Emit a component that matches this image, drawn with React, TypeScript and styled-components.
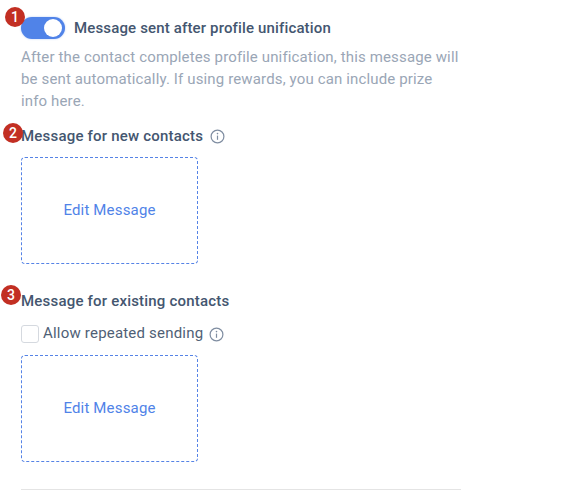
import { createGlobalStyle } from "styled-components";
import styled from "styled-components";

const GlobalStyle = createGlobalStyle`
  html, body {
    margin: 0;
    background: #fff;
    font-family: Roboto, "Liberation Sans", sans-serif;
  }
`;

const Page = styled.div`
  position: relative;
  width: 568px;
  height: 498px;
  box-sizing: border-box;
  padding: 17px 0 0 21px;
  overflow: hidden;
`;

const Content = styled.div`
  width: 440px;
  display: flex;
  flex-direction: column;
`;

const ToggleRow = styled.div`
  display: flex;
  align-items: center;
  gap: 9px;
  height: 22px;
`;

const Toggle = styled.div`
  position: relative;
  width: 44px;
  height: 22px;
  border-radius: 11px;
  background: #5083e8;
  box-shadow: 0 0 2px rgba(80, 131, 232, 0.45);
  &::after {
    content: "";
    position: absolute;
    top: 2px;
    right: 3px;
    width: 18px;
    height: 18px;
    border-radius: 50%;
    background: #fff;
  }
`;

const Heading = styled.div`
  font-size: 15px;
  font-weight: 500;
  line-height: 22px;
  color: #445670;
  display: flex;
  align-items: center;
  letter-spacing: 0.15px;
`;

const Description = styled.p`
  margin: 7px 0 0;
  font-size: 15px;
  line-height: 22px;
  letter-spacing: 0.14px;
  color: #9aa6b6;
  width: 440px;
`;

const SectionHeading = styled(Heading)<{ $top: number }>`
  margin-top: ${(p) => p.$top}px;
  gap: 7px;
  letter-spacing: 0.2px;
`;

const MessageBox = styled.div<{ $top: number }>`
  margin-top: ${(p) => p.$top}px;
  width: 177px;
  height: 107px;
  box-sizing: border-box;
  padding-bottom: 2px;
  border: 1px dashed #5583e6;
  border-radius: 4px;
  display: flex;
  align-items: center;
  justify-content: center;
  color: #5083e8;
  font-size: 15px;
  letter-spacing: 0.17px;
`;

const CheckRow = styled.label`
  margin-top: 13px;
  display: flex;
  align-items: center;
  height: 18px;
  font-size: 15px;
  letter-spacing: 0.2px;
  color: #4f5f76;
`;

const CheckBox = styled.span`
  width: 16px;
  height: 16px;
  border: 1px solid #d5d9df;
  border-radius: 3px;
  background: #fff;
  margin-right: 4px;
`;

const CheckText = styled.span`
  margin-bottom: 2px;
`;

const Divider = styled.div`
  margin-top: 27px;
  height: 1px;
  background: #e4e4e4;
`;

const Badge = styled.div<{ $left: number; $top: number }>`
  position: absolute;
  left: ${(p) => p.$left}px;
  top: ${(p) => p.$top}px;
  width: 20px;
  height: 20px;
  border-radius: 50%;
  background: #c22f23;
  color: #fff;
  font-size: 14px;
  font-weight: 500;
  line-height: 20px;
  text-align: center;
`;

const InfoWrap = styled.span<{ $left: number }>`
  display: inline-flex;
  margin-left: ${(p) => p.$left}px;
`;

function InfoIcon({ left = 0 }: { left?: number }) {
  return (
    <InfoWrap $left={left}>
      <svg width="15" height="15" viewBox="0 0 15 15" fill="none">
        <circle cx="7.5" cy="7.5" r="6.4" stroke="#7f8da1" strokeWidth="1.2" />
        <circle cx="7.5" cy="4.6" r="0.8" fill="#7f8da1" />
        <path d="M7.5 6.6v4.2" stroke="#7f8da1" strokeWidth="1.2" />
      </svg>
    </InfoWrap>
  );
}

export default function App() {
  return (
    <Page>
      <GlobalStyle />
      <Content>
        <ToggleRow>
          <Toggle />
          <Heading>Message sent after profile unification</Heading>
        </ToggleRow>
        <Description>
          After the contact completes profile unification, this message will
          be sent automatically. If using rewards, you can include prize info
          here.
        </Description>
        <SectionHeading $top={13}>
          Message for new contacts
          <InfoIcon />
        </SectionHeading>
        <MessageBox $top={10}>Edit Message</MessageBox>
        <SectionHeading $top={26}>Message for existing contacts</SectionHeading>
        <CheckRow>
          <CheckBox />
          <CheckText>Allow repeated sending</CheckText>
          <InfoIcon left={6} />
        </CheckRow>
        <MessageBox $top={12}>Edit Message</MessageBox>
        <Divider />
      </Content>
      <Badge $left={5} $top={7}>1</Badge>
      <Badge $left={3} $top={123}>2</Badge>
      <Badge $left={1} $top={285}>3</Badge>
    </Page>
  );
}
